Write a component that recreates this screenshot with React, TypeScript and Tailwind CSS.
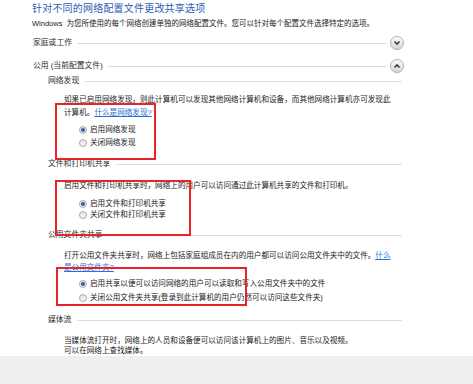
import React from 'react';

const font = "font-['Liberation_Sans','Noto_Sans_CJK_SC',sans-serif]";

const Chevron: React.FC<{ up?: boolean }> = ({ up }) => (
  <div className="ml-[4px] flex h-[14px] w-[14px] shrink-0 items-center justify-center rounded-full border border-[#b4b4b4] bg-gradient-to-b from-[#fbfbfb] to-[#d6d6d6] shadow-[0_0_1px_#ddd]">
    <svg width="8" height="6" viewBox="0 0 8 6">
      {up ? (
        <polyline points="1.5,4.5 4,2 6.5,4.5" fill="none" stroke="#3c3c3c" strokeWidth="1.6" />
      ) : (
        <polyline points="1.5,1.5 4,4 6.5,1.5" fill="none" stroke="#3c3c3c" strokeWidth="1.6" />
      )}
    </svg>
  </div>
);

// top level group (家庭或工作 / 公用)
const Group: React.FC<{ label: string; up?: boolean; className?: string }> = ({ label, up, className }) => (
  <div className={`flex h-[14px] items-center pl-[33px] ${className ?? ''}`}>
    <span className="whitespace-nowrap text-[7.8px] leading-[12px] text-[#2e2e2e]">{label}</span>
    <div className="ml-[5px] h-px w-0 flex-1 bg-[#d9d9d9]" />
    <Chevron up={up} />
    <div className="w-[69px]" />
  </div>
);

// section header (网络发现 ...)
const Section: React.FC<{ label: string; className?: string }> = ({ label, className }) => (
  <div className={`flex h-[12px] items-center pl-[48px] pr-[71px] ${className ?? ''}`}>
    <span className="whitespace-nowrap text-[7.8px] leading-[12px] text-[#2e2e2e]">{label}</span>
    <div className="ml-[6px] h-px flex-1 bg-[#dedede]" />
  </div>
);

const Radio: React.FC<{ label: string; checked?: boolean; className?: string }> = ({ label, checked, className }) => (
  <div className={`flex items-center pl-[79px] ${className ?? ''}`}>
    <div className="flex h-[8px] w-[8px] shrink-0 items-center justify-center rounded-full border border-[#a9a9a9] bg-gradient-to-b from-[#e2e2e2] to-[#f8f8f8]">
      {checked && <div className="h-[4px] w-[4px] rounded-full bg-[#2d5fa8]" />}
    </div>
    <span className="ml-[3px] whitespace-nowrap text-[7.6px] text-[#222]">{label}</span>
  </div>
);

const Body: React.FC<{ children: React.ReactNode; className?: string }> = ({ children, className }) => (
  <div className={`flex items-center whitespace-nowrap pl-[64px] text-[7.6px] text-[#222] ${className ?? ''}`}>
    <span>{children}</span>
  </div>
);

const Link: React.FC<{ children: React.ReactNode }> = ({ children }) => (
  <span className="text-[#2a6fd6] underline">{children}</span>
);

export default function App() {
  return (
    <div className={`relative h-[384px] w-[473px] overflow-hidden bg-white ${font}`}>
      <div className="flex h-[16px] items-center pl-[32px] text-[10px] tracking-[0.2px] text-[#2d5cb4]">
        针对不同的网络配置文件更改共享选项
      </div>
      <div className="mt-[2px] flex h-[12px] items-center whitespace-nowrap pl-[32px] text-[7.5px] text-[#222]">
        <span className="mr-[4px]">Windows</span>
        <span>为您所使用的每个网络创建单独的网络配置文件。您可以针对每个配置文件选择特定的选项。</span>
      </div>

      <Group label="家庭或工作" className="mt-[6px]" />
      <Group label="公用 (当前配置文件)" up className="mt-[9px]" />

      {/* 网络发现 */}
      <Section label="网络发现" className="mt-[2px]" />
      <Body className="mt-[6px] h-[13px]">
        如果已启用网络发现，则此计算机可以发现其他网络计算机和设备，而其他网络计算机亦可发现此
      </Body>
      <Body className="h-[13px]">
        计算机。<Link>什么是网络发现?</Link>
      </Body>
      <Radio label="启用网络发现" checked className="mt-[5px] h-[12px]" />
      <Radio label="关闭网络发现" className="mt-[1px] h-[12px]" />

      {/* 文件和打印机共享 */}
      <Section label="文件和打印机共享" className="mt-[9px]" />
      <Body className="mt-[10px] h-[12px]">
        启用文件和打印机共享时，网络上的用户可以访问通过此计算机共享的文件和打印机。
      </Body>
      <Radio label="启用文件和打印机共享" checked className="mt-[6px] h-[11px]" />
      <Radio label="关闭文件和打印机共享" className="h-[11px]" />

      {/* 公用文件夹共享 */}
      <Section label="公用文件夹共享" className="mt-[9px]" />
      <Body className="mt-[9px] h-[12px]">
        打开公用文件夹共享时，网络上包括家庭组成员在内的用户都可以访问公用文件夹中的文件。<Link>什么</Link>
      </Body>
      <Body className="h-[12px]">
        <Link>是公用文件夹?</Link>
      </Body>
      <Radio
        label="启用共享以便可以访问网络的用户可以读取和写入公用文件夹中的文件"
        checked
        className="mt-[3px] h-[14px]"
      />
      <Radio label="关闭公用文件夹共享(登录到此计算机的用户仍然可以访问这些文件夹)" className="h-[14px]" />

      {/* 媒体流 */}
      <Section label="媒体流" className="mt-[9px]" />
      <Body className="mt-[9px] h-[11px]">
        当媒体流打开时，网络上的人员和设备便可以访问该计算机上的图片、音乐以及视频。
      </Body>
      <Body className="h-[10px]">可以在网络上查找媒体。</Body>

      <div className="h-[28px] bg-[#efefef]" />

      {/* red annotation boxes */}
      <div className="absolute left-[55px] top-[103px] h-[57px] w-[101px] border-2 border-[#e8232c]" />
      <div className="absolute left-[55px] top-[180px] h-[56px] w-[136px] border-2 border-[#e8232c]" />
      <div className="absolute left-[56px] top-[267px] h-[39px] w-[191px] border-2 border-[#e8232c]" />
    </div>
  );
}
